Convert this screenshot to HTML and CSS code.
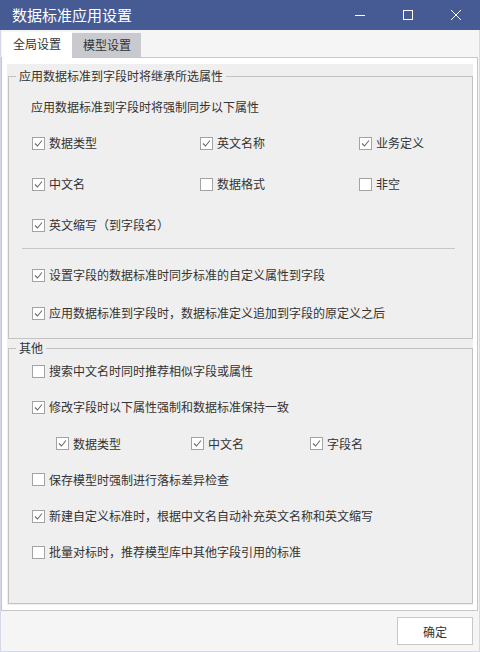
FILE: index.html
```html
<!DOCTYPE html>
<html lang="zh-CN">
<head>
<meta charset="utf-8">
<title>数据标准应用设置</title>
<link rel="stylesheet" href="styles.css">
</head>
<body>
<div class="window">
  <div class="titlebar">
    <div class="title">数据标准应用设置</div>
    <div class="controls">
      <div class="ctl"><svg width="12" height="12" viewBox="0 0 12 12"><path d="M1 6.5H11" stroke="#fff" stroke-width="1"/></svg></div>
      <div class="ctl"><svg width="12" height="12" viewBox="0 0 12 12"><rect x="1.5" y="1.5" width="9" height="9" fill="none" stroke="#fff" stroke-width="1"/></svg></div>
      <div class="ctl"><svg width="12" height="12" viewBox="0 0 12 12"><path d="M1 1L11 11M11 1L1 11" stroke="#fff" stroke-width="1"/></svg></div>
    </div>
  </div>
  <div class="frame">
    <div class="tabstrip">
      <div class="tab active">全局设置</div>
      <div class="tab">模型设置</div>
    </div>
    <div class="tabpage">
      <div class="panel">
        <div class="group g1">
          <div class="legend">应用数据标准到字段时将继承所选属性</div>
          <div class="heading">应用数据标准到字段时将强制同步以下属性</div>
          <div class="grid3">
            <label class="row"><span class="cb"><svg width="11" height="11" viewBox="0 0 11 11"><path d="M2 5.5L4.5 8L9 2.5" fill="none" stroke="#6a6a6a" stroke-width="1.1"/></svg></span>数据类型</label>
            <label class="row"><span class="cb"><svg width="11" height="11" viewBox="0 0 11 11"><path d="M2 5.5L4.5 8L9 2.5" fill="none" stroke="#6a6a6a" stroke-width="1.1"/></svg></span>英文名称</label>
            <label class="row"><span class="cb"><svg width="11" height="11" viewBox="0 0 11 11"><path d="M2 5.5L4.5 8L9 2.5" fill="none" stroke="#6a6a6a" stroke-width="1.1"/></svg></span>业务定义</label>
            <label class="row"><span class="cb"><svg width="11" height="11" viewBox="0 0 11 11"><path d="M2 5.5L4.5 8L9 2.5" fill="none" stroke="#6a6a6a" stroke-width="1.1"/></svg></span>中文名</label>
            <label class="row"><span class="cb"></span>数据格式</label>
            <label class="row"><span class="cb"></span>非空</label>
            <label class="row"><span class="cb"><svg width="11" height="11" viewBox="0 0 11 11"><path d="M2 5.5L4.5 8L9 2.5" fill="none" stroke="#6a6a6a" stroke-width="1.1"/></svg></span>英文缩写（到字段名）</label>
          </div>
          <div class="sep"></div>
          <label class="row r4"><span class="cb"><svg width="11" height="11" viewBox="0 0 11 11"><path d="M2 5.5L4.5 8L9 2.5" fill="none" stroke="#6a6a6a" stroke-width="1.1"/></svg></span>设置字段的数据标准时同步标准的自定义属性到字段</label>
          <label class="row r5"><span class="cb"><svg width="11" height="11" viewBox="0 0 11 11"><path d="M2 5.5L4.5 8L9 2.5" fill="none" stroke="#6a6a6a" stroke-width="1.1"/></svg></span>应用数据标准到字段时，数据标准定义追加到字段的原定义之后</label>
        </div>
        <div class="group g2">
          <div class="legend">其他</div>
          <div class="list">
            <label class="row"><span class="cb"></span>搜索中文名时同时推荐相似字段或属性</label>
            <label class="row"><span class="cb"><svg width="11" height="11" viewBox="0 0 11 11"><path d="M2 5.5L4.5 8L9 2.5" fill="none" stroke="#6a6a6a" stroke-width="1.1"/></svg></span>修改字段时以下属性强制和数据标准保持一致</label>
            <div class="sub">
              <label class="row"><span class="cb"><svg width="11" height="11" viewBox="0 0 11 11"><path d="M2 5.5L4.5 8L9 2.5" fill="none" stroke="#6a6a6a" stroke-width="1.1"/></svg></span>数据类型</label>
              <label class="row"><span class="cb"><svg width="11" height="11" viewBox="0 0 11 11"><path d="M2 5.5L4.5 8L9 2.5" fill="none" stroke="#6a6a6a" stroke-width="1.1"/></svg></span>中文名</label>
              <label class="row"><span class="cb"><svg width="11" height="11" viewBox="0 0 11 11"><path d="M2 5.5L4.5 8L9 2.5" fill="none" stroke="#6a6a6a" stroke-width="1.1"/></svg></span>字段名</label>
            </div>
            <label class="row"><span class="cb"></span>保存模型时强制进行落标差异检查</label>
            <label class="row"><span class="cb"><svg width="11" height="11" viewBox="0 0 11 11"><path d="M2 5.5L4.5 8L9 2.5" fill="none" stroke="#6a6a6a" stroke-width="1.1"/></svg></span>新建自定义标准时，根据中文名自动补充英文名称和英文缩写</label>
            <label class="row"><span class="cb"></span>批量对标时，推荐模型库中其他字段引用的标准</label>
          </div>
        </div>
      </div>
    </div>
    <div class="footer">
      <button class="btn">确定</button>
    </div>
  </div>
</div>
</body>
</html>
```
FILE: styles.css
```css
* { box-sizing: border-box; }
html, body { margin: 0; padding: 0; }
body {
  width: 480px;
  height: 652px;
  font-family: "Noto Sans CJK SC", "Noto Sans", sans-serif;
  font-size: 12px;
  color: #333;
  background: #f5f5f5;
}
.window {
  width: 480px;
  height: 652px;
  display: flex;
  flex-direction: column;
}
.titlebar {
  height: 30px;
  flex: none;
  background: #465b94;
  display: flex;
  align-items: center;
  justify-content: space-between;
}
.title {
  color: #fff;
  font-size: 15px;
  line-height: 30px;
  padding-left: 12px;
}
.controls { display: flex; height: 30px; }
.ctl {
  width: 48px;
  height: 30px;
  display: flex;
  align-items: center;
  justify-content: center;
}
.frame {
  flex: 1;
  display: flex;
  flex-direction: column;
  background: #f5f5f5;
  border: 1px solid #d5d8e8;
  border-top: none;
}
.tabstrip {
  height: 27px;
  flex: none;
  display: flex;
  align-items: flex-end;
  padding-left: 1px;
}
.tab {
  height: 24px;
  width: 69px;
  line-height: 24px;
  padding-left: 11px;
  background: #c9cacf;
}
.tab.active {
  width: 70px;
  height: 26px;
  background: #fff;
  margin-bottom: -1px;
  position: relative;
  z-index: 1;
}
.tabpage {
  height: 554px;
  flex: none;
  display: flex;
  margin-right: 1px;
  background: #fff;
  border: 1px solid #c6c6c6;
  padding: 6px 4px 5px 5px;
}
.panel {
  flex: 1;
  background: #efefef;
  display: flex;
  flex-direction: column;
  padding: 12px 0 1px 1px;
  gap: 9px;
}
.group {
  position: relative;
  border: 1px solid #c2c2c2;
}
.legend {
  position: absolute;
  top: -9px;
  left: 7px;
  line-height: 16px;
  padding: 0 3px;
  background: #efefef;
}
.g1 {
  height: 263px;
  flex: none;
  padding: 20px 0 0 23px;
}
.g2 {
  flex: 1;
  padding: 12px 0 0 23px;
}
.heading {
  line-height: 20px;
  margin-left: -1px;
  margin-bottom: 16px;
}
.row {
  display: flex;
  align-items: center;
  height: 20px;
  line-height: 20px;
  white-space: nowrap;
}
.cb {
  width: 13px;
  height: 13px;
  border: 1px solid #a3a3a3;
  background: #fff;
  margin-right: 4px;
  flex: none;
  display: flex;
  align-items: center;
  justify-content: center;
}
.cb svg { display: block; }
.grid3 {
  display: grid;
  grid-template-columns: 168px 159px auto;
  row-gap: 21px;
}
.sep {
  height: 1px;
  width: 433px;
  background: #c6c6c6;
  margin: 13px 0 0 -10px;
}
.r4 { margin-top: 16px; }
.r5 { margin-top: 18px; }
.list {
  display: flex;
  flex-direction: column;
  gap: 16.3px;
}
.sub {
  display: grid;
  grid-template-columns: 135px 119px auto;
  padding-left: 24px;
}
.footer {
  flex: 1;
  display: flex;
  justify-content: flex-end;
  align-items: flex-start;
  padding: 6px 6px 0 0;
}
.btn {
  width: 76px;
  height: 28px;
  background: #fff;
  border: 1px solid #c8c8c8;
  font-family: "Noto Sans CJK SC", "Noto Sans", sans-serif;
  font-size: 12px;
  color: #333;
  padding: 0;
}
```
